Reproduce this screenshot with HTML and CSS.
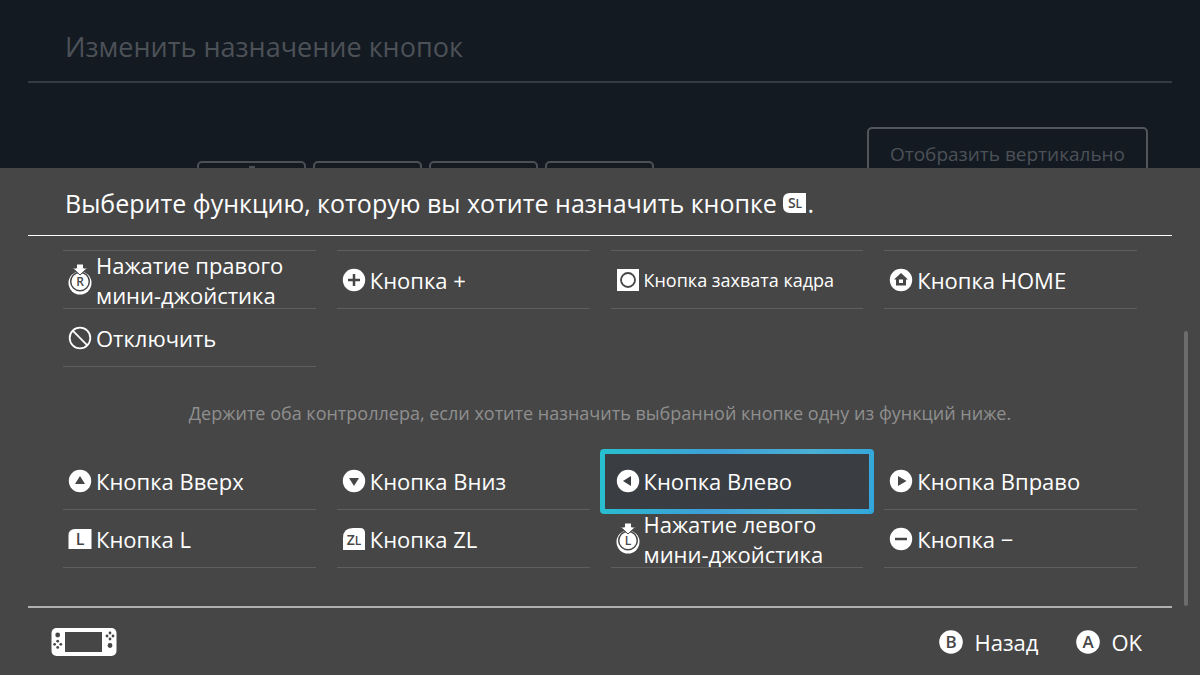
FILE: index.html
```
<!DOCTYPE html>
<html lang="ru">
<head>
<meta charset="utf-8">
<meta name="viewport" content="width=device-width, initial-scale=1">
<title>Изменить назначение кнопок</title>
<link rel="stylesheet" href="styles.css">
</head>
<body>
<div class="screen">
  <div class="backdrop">
    <header class="backdrop-head"><h1 class="backdrop-title">Изменить назначение кнопок</h1></header>
    <div class="backdrop-body">
      <div class="slots">
        <span class="slot"><span class="slot-mark"></span></span>
        <span class="slot"></span>
        <span class="slot"></span>
        <span class="slot"></span>
      </div>
      <button class="orient" type="button">Отобразить вертикально</button>
    </div>
  </div>

  <main class="sheet">
    <header class="sheet-head">
      <h2 class="sheet-title">Выберите функцию, которую вы хотите назначить кнопке
        <svg class="sl" viewBox="0 0 24 20" role="img" aria-label="SL"><path fill="#fff" d="M7 0H23V20H7Q0 20 0 13V7Q0 0 7 0Z"/><text class="glyph" x="12" y="15" font-size="14">S<tspan font-size="12">L</tspan></text></svg>.</h2>
    </header>

    <div class="list">
      <div class="grid grid-top">
        <button class="item" type="button">
          <svg class="icon tall" viewBox="0 0 24 32"><circle cx="12" cy="19" r="11.500" fill="#fff"/><circle cx="12" cy="17.500" r="9.300" fill="#fff" stroke="#464646" stroke-width="1.500"/><path d="M8.500 0H15.500V4H19.500L12 11L4.500 4H8.500Z" fill="#fff" stroke="#464646" stroke-width="1"/><text class="glyph" x="12" y="22" font-size="12">R</text></svg>
          <span>Нажатие правого мини-джойстика</span></button>
        <button class="item" type="button">
          <svg class="icon" viewBox="0 0 24 24"><circle cx="12" cy="12" r="11.200" fill="#fff"/><path d="M12 6V18M6 12H18" stroke="#464646" stroke-width="2.500"/></svg>
          <span>Кнопка +</span></button>
        <button class="item small" type="button">
          <svg class="icon" viewBox="0 0 24 24"><path d="M1 1H23V23H1Z" fill="#fff"/><circle cx="12" cy="12" r="7" fill="none" stroke="#464646" stroke-width="1.800"/></svg>
          <span>Кнопка захвата кадра</span></button>
        <button class="item" type="button">
          <svg class="icon" viewBox="0 0 24 24"><circle cx="12" cy="12" r="11.200" fill="#fff"/><path fill="#464646" fill-rule="evenodd" d="M12 5L19 11.500H17V17.500H7V11.500H5ZM10 11.500V15H14V11.500Z"/></svg>
          <span>Кнопка HOME</span></button>
        <button class="item" type="button">
          <svg class="icon" viewBox="0 0 24 24" fill="none" stroke="#fff" stroke-width="1.800"><circle cx="12" cy="12" r="10.300"/><path d="M4.700 4.700L19.300 19.300"/></svg>
          <span>Отключить</span></button>
      </div>

      <p class="hint">Держите оба контроллера, если хотите назначить выбранной кнопке одну из функций ниже.</p>

      <div class="grid">
        <button class="item" type="button">
          <svg class="icon" viewBox="0 0 24 24"><circle cx="12" cy="12" r="11.200" fill="#fff"/><path d="M12 7L17 15H7Z" fill="#464646"/></svg>
          <span>Кнопка Вверх</span></button>
        <button class="item" type="button">
          <svg class="icon" viewBox="0 0 24 24"><circle cx="12" cy="12" r="11.200" fill="#fff"/><path d="M12 17L17 9H7Z" fill="#464646"/></svg>
          <span>Кнопка Вниз</span></button>
        <button class="item selected" type="button" autofocus>
          <svg class="icon" viewBox="0 0 24 24"><circle cx="12" cy="12" r="11.200" fill="#fff"/><path d="M7 12L15 7V17Z" fill="#3a3d42"/></svg>
          <span>Кнопка Влево</span></button>
        <button class="item" type="button">
          <svg class="icon" viewBox="0 0 24 24"><circle cx="12" cy="12" r="11.200" fill="#fff"/><path d="M17.500 12L9 7V17Z" fill="#464646"/></svg>
          <span>Кнопка Вправо</span></button>
        <button class="item" type="button">
          <svg class="icon" viewBox="0 0 24 24"><path fill="#fff" d="M7 2H23.500V22H.5V8.500Q.5 2 7 2Z"/><text class="glyph" x="12" y="18" font-size="16">L</text></svg>
          <span>Кнопка L</span></button>
        <button class="item" type="button">
          <svg class="icon" viewBox="0 0 24 24"><path fill="#fff" d="M11 1H18Q23 1 23 6V23H1V11Q1 1 11 1Z"/><text class="glyph" x="12" y="18" font-size="14">Z<tspan font-size="12">L</tspan></text></svg>
          <span>Кнопка ZL</span></button>
        <button class="item" type="button">
          <svg class="icon tall" viewBox="0 0 24 32"><circle cx="12" cy="19" r="11.500" fill="#fff"/><circle cx="12" cy="17.500" r="9.300" fill="#fff" stroke="#464646" stroke-width="1.500"/><path d="M8.500 0H15.500V4H19.500L12 11L4.500 4H8.500Z" fill="#fff" stroke="#464646" stroke-width="1"/><text class="glyph" x="12" y="22" font-size="12">L</text></svg>
          <span>Нажатие левого мини-джойстика</span></button>
        <button class="item" type="button">
          <svg class="icon" viewBox="0 0 24 24"><circle cx="12" cy="12" r="11.200" fill="#fff"/><path d="M6 12H18" stroke="#464646" stroke-width="2.500"/></svg>
          <span>Кнопка −</span></button>
      </div>
      <div class="scrollbar"></div>
    </div>

    <footer class="foot">
      <svg class="console" viewBox="0 0 66 30" role="img" aria-label="Консоль"><rect x=".5" y="1" width="65" height="28" rx="5" fill="#fff"/><g fill="#464646"><path d="M14 5H51V25H14Z"/><circle cx="6.700" cy="8" r="2.400"/><circle cx="59" cy="18.500" r="2.400"/><circle cx="6.700" cy="14.200" r="1.400"/><circle cx="6.700" cy="20.400" r="1.400"/><circle cx="3.600" cy="17.300" r="1.400"/><circle cx="9.800" cy="17.300" r="1.400"/><circle cx="59" cy="6" r="1.400"/><circle cx="59" cy="12" r="1.400"/><circle cx="56" cy="9" r="1.400"/><circle cx="62" cy="9" r="1.400"/></g></svg>
      <div class="actions">
        <button class="action" type="button"><svg class="icon" viewBox="0 0 24 24"><circle cx="12" cy="12" r="11.800" fill="#fff"/><text class="glyph" x="12" y="18" font-size="17">B</text></svg><span>Назад</span></button>
        <button class="action" type="button"><svg class="icon" viewBox="0 0 24 24"><circle cx="12" cy="12" r="11.800" fill="#fff"/><text class="glyph" x="12" y="18" font-size="17">A</text></svg><span>OK</span></button>
      </div>
    </footer>
  </main>
</div>
</body>
</html>
```
FILE: styles.css
```
* { box-sizing: border-box; }

body {
  margin: 0;
  background: #464646;
  color: #fff;
  font-family: "Open Sans", "Noto Sans", sans-serif;
  font-weight: 400;
}

h1, h2, p { margin: 0; font-weight: inherit; }

button {
  padding: 0;
  border: 0;
  background: none;
  color: inherit;
  font: inherit;
  text-align: left;
  outline: none;
}

.screen {
  display: flex;
  flex-direction: column;
  min-height: 100vh;
}

.backdrop {
  height: 168px;
  overflow: hidden;
  background: #141a22;
  color: #4c5157;
}

.backdrop-head {
  margin: 0 28px;
  padding: 27px 37px 14px;
  border-bottom: 2px solid #353b43;
}

.backdrop-title { font-size: 27px; line-height: 40px; }

.backdrop-body {
  display: flex;
  justify-content: space-between;
  align-items: flex-start;
  padding: 44px 52px 0 197px;
}

.slots { display: flex; gap: 7px; padding-top: 34px; }

.slot {
  width: 109px;
  height: 54px;
  padding-top: 3px;
  border: 2px solid #4b5056;
  border-radius: 5px;
}

.slot-mark {
  display: block;
  width: 6px;
  height: 4px;
  margin: 0 auto;
  background: #4b5056;
}

.orient {
  width: 281px;
  height: 54px;
  border: 2px solid #51565c;
  border-radius: 5px;
  font-size: 19px;
  text-align: center;
}

.sheet {
  flex: 1;
  display: flex;
  flex-direction: column;
  background: #464646;
}

.sheet-head {
  margin: 0 28px;
  padding: 15px 37px 12px;
  border-bottom: 1px solid #fff;
}

.sheet-title { font-size: 25px; line-height: 40px; }

.sl { width: 24px; height: 20px; }

.glyph {
  fill: #464646;
  font-weight: 600;
  text-anchor: middle;
}

.list {
  position: relative;
  flex: 1;
  padding: 14px 63px 0;
}

.grid {
  display: grid;
  grid-template-columns: repeat(4, 1fr);
  column-gap: 21px;
}

.item {
  display: flex;
  align-items: center;
  gap: 4px;
  height: 58px;
  padding: 1px 0 0 5px;
  border-bottom: 1px solid #5e5e5e;
  font-size: 22px;
  line-height: 30px;
}

.item.small { font-size: 18px; }

.grid-top .item:nth-child(-n+4) {
  height: 59px;
  border-top: 1px solid #5e5e5e;
}

.icon { flex: none; width: 24px; height: 24px; }
.icon.tall { height: 32px; }

.item.selected {
  position: relative;
  border-bottom-color: transparent;
}

.item.selected::before {
  content: "";
  position: absolute;
  inset: -3px -11px -5px -11px;
  border: 5px solid transparent;
  border-radius: 4px;
  background:
    linear-gradient(#3a3d42, #3a3d42) padding-box,
    linear-gradient(100deg, #27c0cf, #3d9fd6 40%, #4ab0d4 75%, #31a6dc) border-box;
}

.item.selected > * { position: relative; }

.hint {
  padding: 33px 0 25px;
  color: #8f8f8f;
  font-size: 18px;
  line-height: 27px;
  text-align: center;
}

.scrollbar {
  position: absolute;
  top: 95px;
  right: 12px;
  bottom: 0;
  width: 4px;
  border-radius: 2px;
  background: #6c6c6c;
}

.foot {
  display: flex;
  justify-content: space-between;
  align-items: center;
  height: 69px;
  margin: 0 28px;
  padding: 0 30px 0 23px;
  border-top: 2px solid #b0b0b0;
}

.console { width: 66px; height: 30px; }

.actions { display: flex; gap: 38px; }

.action {
  display: flex;
  align-items: center;
  gap: 11px;
  font-size: 22px;
  line-height: 30px;
}
```
